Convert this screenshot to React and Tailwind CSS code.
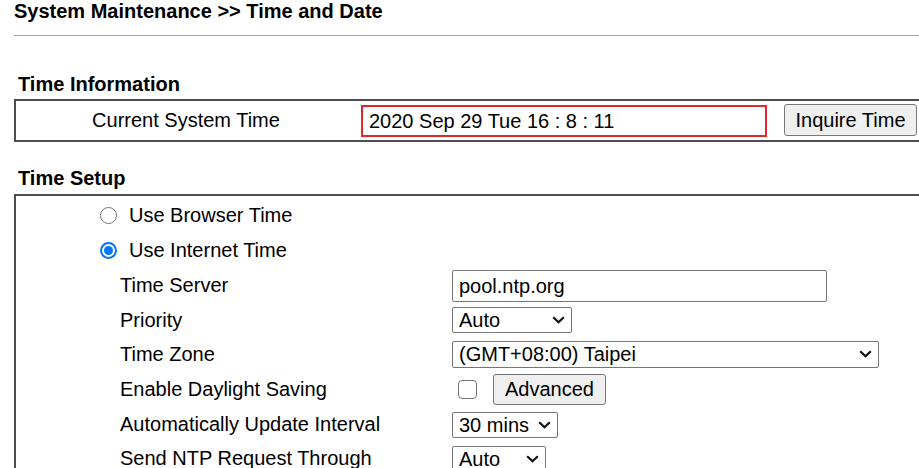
import React from "react";

function Chevron() {
  return (
    <svg width="13" height="8" viewBox="0 0 13 8" className="shrink-0">
      <path d="M1.2 1.2 L6.5 6.3 L11.8 1.2" fill="none" stroke="#111" strokeWidth="2.2" />
    </svg>
  );
}

function FakeSelect({ value, className }) {
  return (
    <div
      className={
        "flex h-[26px] items-center justify-between rounded-[2px] border border-[#767676] bg-white pl-[6px] pr-[6px] text-[20px] leading-none text-black " +
        className
      }
    >
      <span>{value}</span>
      <Chevron />
    </div>
  );
}

function Radio({ checked }) {
  if (checked) {
    return (
      <span className="ml-[84px] flex h-[17px] w-[17px] shrink-0 items-center justify-center rounded-full border-[2px] border-[#0075ff] bg-white">
        <span className="h-[9px] w-[9px] rounded-full bg-[#0075ff]" />
      </span>
    );
  }
  return <span className="ml-[84px] h-[17px] w-[17px] shrink-0 rounded-full border border-[#767676] bg-white" />;
}

function Row({ h, label, children }) {
  return (
    <div className="flex items-center" style={{ height: h }}>
      <div className="ml-[104px] w-[332px] text-[20px] leading-[23px]">{label}</div>
      {children}
    </div>
  );
}

export default function App() {
  return (
    <div className="h-[468px] w-[919px] overflow-hidden bg-white font-['Liberation_Sans',Arial,sans-serif] text-black">
      <div className="ml-[14px] h-[23px] text-[20px] font-bold leading-[23px]">
        System Maintenance &gt;&gt; Time and Date
      </div>
      <div className="ml-[14px] mt-[12px] h-px bg-[#a3a3a3]" />

      <div className="ml-[18px] mt-[37px] h-[23px] text-[20px] font-bold leading-[23px]">Time Information</div>
      <div className="ml-[14px] mt-[3px] w-[920px] border-2 border-[#4d4d4d]">
        <div className="flex h-[39px] items-center">
          <div className="w-[340px] text-center text-[20px] leading-[23px]">Current System Time</div>
          <div className="ml-[5px] flex h-[32px] w-[406px] items-center border-2 border-[#e3262e] pl-[6px] text-[20px] leading-none">
            2020 Sep 29 Tue 16 : 8 : 11
          </div>
          <button className="ml-[17px] h-[32px] w-[133px] -translate-y-px rounded-[3px] border border-[#767676] bg-[#efefef] text-[20px] leading-none text-black">
            Inquire Time
          </button>
        </div>
      </div>

      <div className="ml-[18px] mt-[25px] h-[23px] text-[20px] font-bold leading-[23px]">Time Setup</div>
      <div className="ml-[14px] mt-[4px] w-[920px] border-2 border-[#4d4d4d]">
        <div className="flex h-[37px] items-center pt-[1px]">
          <Radio />
          <span className="ml-[12px] text-[20px] leading-[23px]">Use Browser Time</span>
        </div>
        <div className="flex h-[35px] items-center">
          <Radio checked />
          <span className="ml-[12px] text-[20px] leading-[23px]">Use Internet Time</span>
        </div>
        <Row h={35} label="Time Server">
          <div className="flex h-[32px] w-[375px] items-center rounded-[2px] border border-[#767676] pl-[6px] text-[20px] leading-none">
            pool.ntp.org
          </div>
        </Row>
        <Row h={34} label="Priority">
          <FakeSelect value="Auto" className="w-[120px]" />
        </Row>
        <Row h={34} label="Time Zone">
          <FakeSelect value="(GMT+08:00) Taipei" className="h-[27px] w-[427px]" />
        </Row>
        <Row h={36} label="Enable Daylight Saving">
          <span className="ml-[6px] h-[19px] w-[19px] shrink-0 rounded-[4px] border border-[#767676] bg-white" />
          <button className="ml-[16px] h-[31px] w-[113px] rounded-[3px] border border-[#767676] bg-[#efefef] text-[20px] leading-none text-black">
            Advanced
          </button>
        </Row>
        <Row h={35} label="Automatically Update Interval">
          <FakeSelect value="30 mins" className="w-[106px]" />
        </Row>
        <Row h={33} label="Send NTP Request Through">
          <FakeSelect value="Auto" className="w-[94px]" />
        </Row>
        <div className="h-[40px]" />
      </div>
    </div>
  );
}
